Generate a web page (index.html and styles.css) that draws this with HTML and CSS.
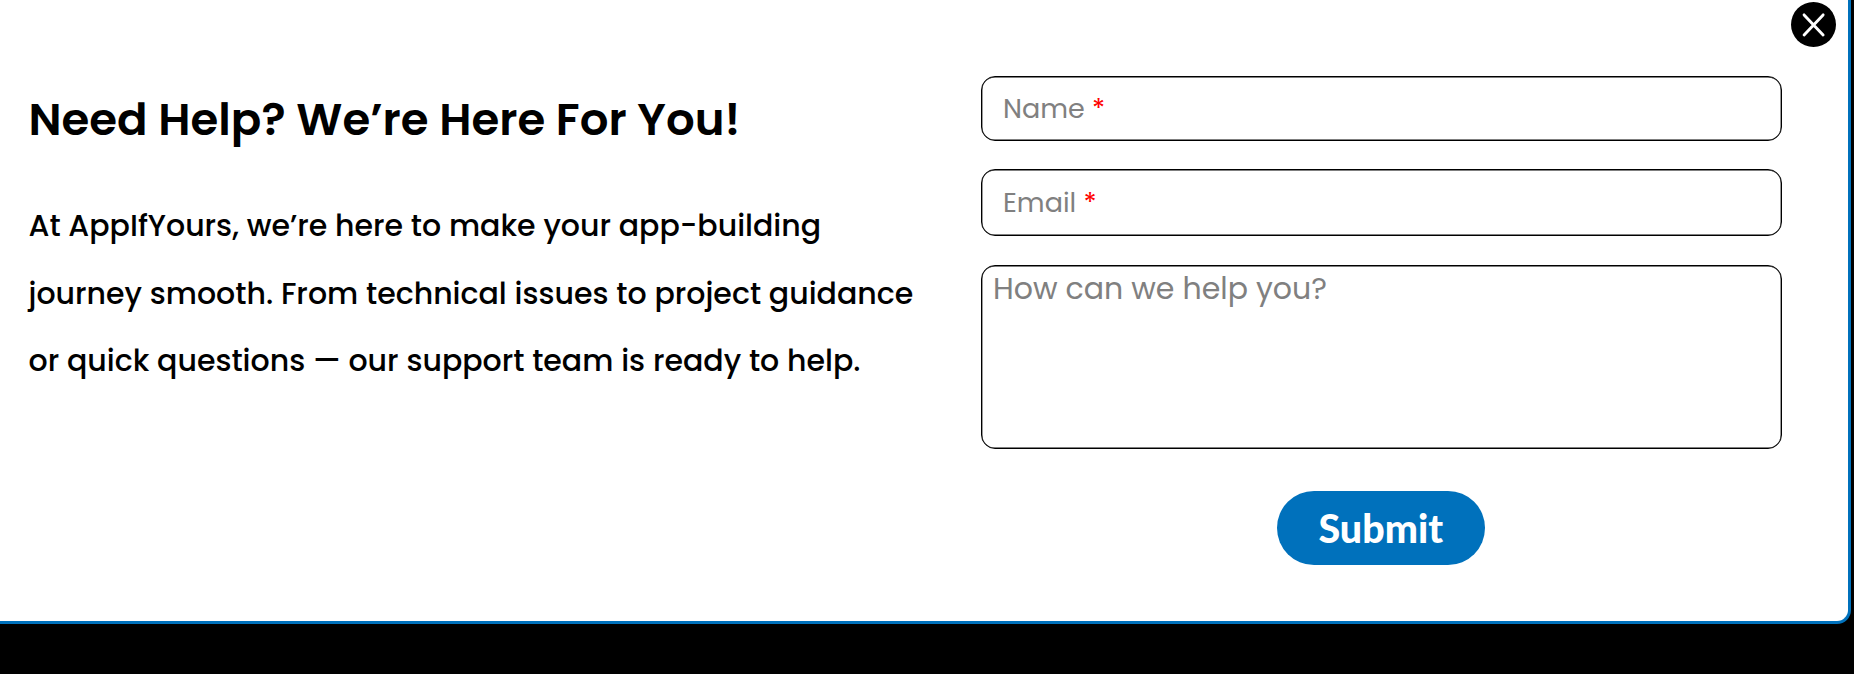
FILE: index.html
```
<!DOCTYPE html>
<html lang="en">
<head>
<meta charset="utf-8">
<title>Need Help?</title>
<link rel="stylesheet" href="styles.css">
</head>
<body>
<main class="dialog">
  <button class="close" aria-label="Close">
    <svg viewBox="0 0 45 45" width="45" height="45"><circle cx="22.5" cy="22.5" r="22.5" fill="#000"/><path d="M13.1 12.9 32.1 32.9M32.1 12.9 13.1 32.9" fill="none" stroke="#fff" stroke-width="2.9" stroke-linecap="round"/></svg>
  </button>
  <section class="intro">
    <h1 class="title">Need Help? We’re Here For You!</h1>
    <p class="copy"><span class="line">At AppIfYours, we’re here to make your app-building</span> <span class="line">journey smooth. From technical issues to project guidance</span> <span class="line">or quick questions — our support team is ready to help.</span></p>
  </section>
  <form class="form">
    <div class="field name"><span class="label">Name</span><span class="req">*</span></div>
    <div class="field email"><span class="label">Email</span><span class="req">*</span></div>
    <div class="message"><span>How can we help you?</span></div>
    <button class="submit" type="button">Submit</button>
  </form>
</main>
</body>
</html>
```
FILE: styles.css
```
* { box-sizing: border-box; }
body {
  margin: 0;
  height: 674px;
  overflow: hidden;
  background: #000;
  color: #000;
  font-family: Poppins, Inter, sans-serif;
}
.dialog {
  position: relative;
  display: flex;
  width: 1851px;
  height: 624.4px;
  background: #fff;
  border: solid #0071bc;
  border-width: 0 3px 3px 0;
  border-radius: 0 0 14px 0;
}
.close {
  position: absolute;
  top: 2px;
  right: 12px;
  width: 45px;
  height: 45px;
  padding: 0;
  border: 0;
  background: none;
}
.close svg { display: block; }
.intro { width: 981px; padding: 88px 0 0 28.5px; white-space: nowrap; }
.title { margin: 0; font-size: 45px; line-height: 64px; font-weight: 600; }
.copy { margin: 40px 0 0; font-size: 30px; line-height: 67.5px; font-weight: 500; }
.line { display: block; width: max-content; }
.form { display: flex; flex-direction: column; width: 800.5px; padding-top: 76px; }
.field, .message {
  border: 1px solid #000;
  border-radius: 14px;
  box-shadow: inset 0 0 0 0.4px #000;
  color: #808080;
}
.field {
  display: flex;
  align-items: center;
  gap: 7.3px;
  height: 65px;
  padding: 1px 0 0 21px;
  margin-bottom: 28px;
  font-size: 27px;
  line-height: 40px;
}
.email { height: 66.5px; margin-bottom: 29px; }
.req { color: #f00; }
.message { height: 184.5px; padding: 2.5px 0 0 11px; font-size: 30px; line-height: 42px; }
.submit {
  align-self: center;
  width: 208.5px;
  height: 73.5px;
  margin: 42px 1px 0 0;
  padding: 0;
  border: 0;
  border-radius: 37px;
  background: #0071bc;
  color: #fff;
  font: 900 39.4px/73px Lato, sans-serif;
}
```
